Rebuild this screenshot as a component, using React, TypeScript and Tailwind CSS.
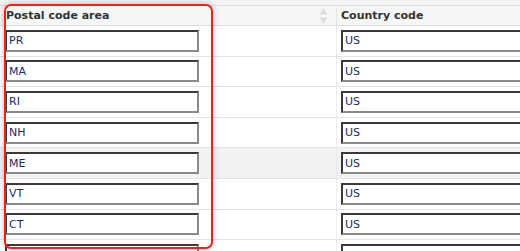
import React from 'react';

type Row = {
  area: string;
  country: string;
  hover?: boolean;
};

const rows: Row[] = [
  { area: 'PR', country: 'US' },
  { area: 'MA', country: 'US' },
  { area: 'RI', country: 'US' },
  { area: 'NH', country: 'US' },
  { area: 'ME', country: 'US', hover: true },
  { area: 'VT', country: 'US' },
  { area: 'CT', country: 'US' },
  { area: '', country: '' },
];

const inputCls =
  'h-[22px] border-2 border-t-[#3a3a3a] border-l-[#3a3a3a] border-b-[#8a8a8a] bg-white px-[2px] text-[11px] text-[#1e2a66] outline-none';

const SortIcon = () => (
  <svg width="9" height="18" viewBox="0 0 9 18" className="shrink-0">
    <path d="M4.5 1 L8.5 7.5 L0.5 7.5 Z" fill="#dcdcdc" />
    <path d="M4.5 17 L8.5 10.5 L0.5 10.5 Z" fill="#dcdcdc" />
  </svg>
);

const App: React.FC = () => {
  return (
    <div
      className="relative h-[251px] w-[520px] overflow-hidden bg-white"
      style={{ fontFamily: '"DejaVu Sans", Verdana, sans-serif' }}
    >
      <div className="h-[5px] bg-[#f3f4f4]" />

      {/* header */}
      <div className="flex h-[21px] border-y border-[#dcdcdc] bg-[#f5f6f6] pt-[1px] text-[11px] font-bold text-[#333]">
        <div className="flex w-[337px] shrink-0 items-center justify-between border-r border-[#e2e2e2] pl-[6px] pr-[8px]">
          <span>Postal code area</span>
          <SortIcon />
        </div>
        <div className="flex flex-1 items-center pl-[4px]">Country code</div>
      </div>

      {/* rows */}
      {rows.map((row, i) => (
        <div
          key={i}
          className={`flex h-[30.6px] w-[620px] border-b border-[#e4e4e4] ${row.hover ? 'bg-[#f2f2f2]' : 'bg-white'}`}
        >
          <div className="flex w-[337px] shrink-0 items-center border-r border-[#ececec] pl-[5px]">
            <input readOnly value={row.area} className={`${inputCls} w-[194px] border-r-[#8a8a8a]`} />
          </div>
          <div className="flex flex-1 items-center pl-[4px]">
            <input readOnly value={row.country} className={`${inputCls} w-[240px] border-r-0`} />
          </div>
        </div>
      ))}

      {/* highlight annotation */}
      <div className="pointer-events-none absolute left-[4px] top-[4px] h-[245px] w-[209px] rounded-[7px] border-2 border-[#ff1a1a] shadow-[0_0_6px_rgba(0,0,0,0.25)]" />
    </div>
  );
};

export default App;
